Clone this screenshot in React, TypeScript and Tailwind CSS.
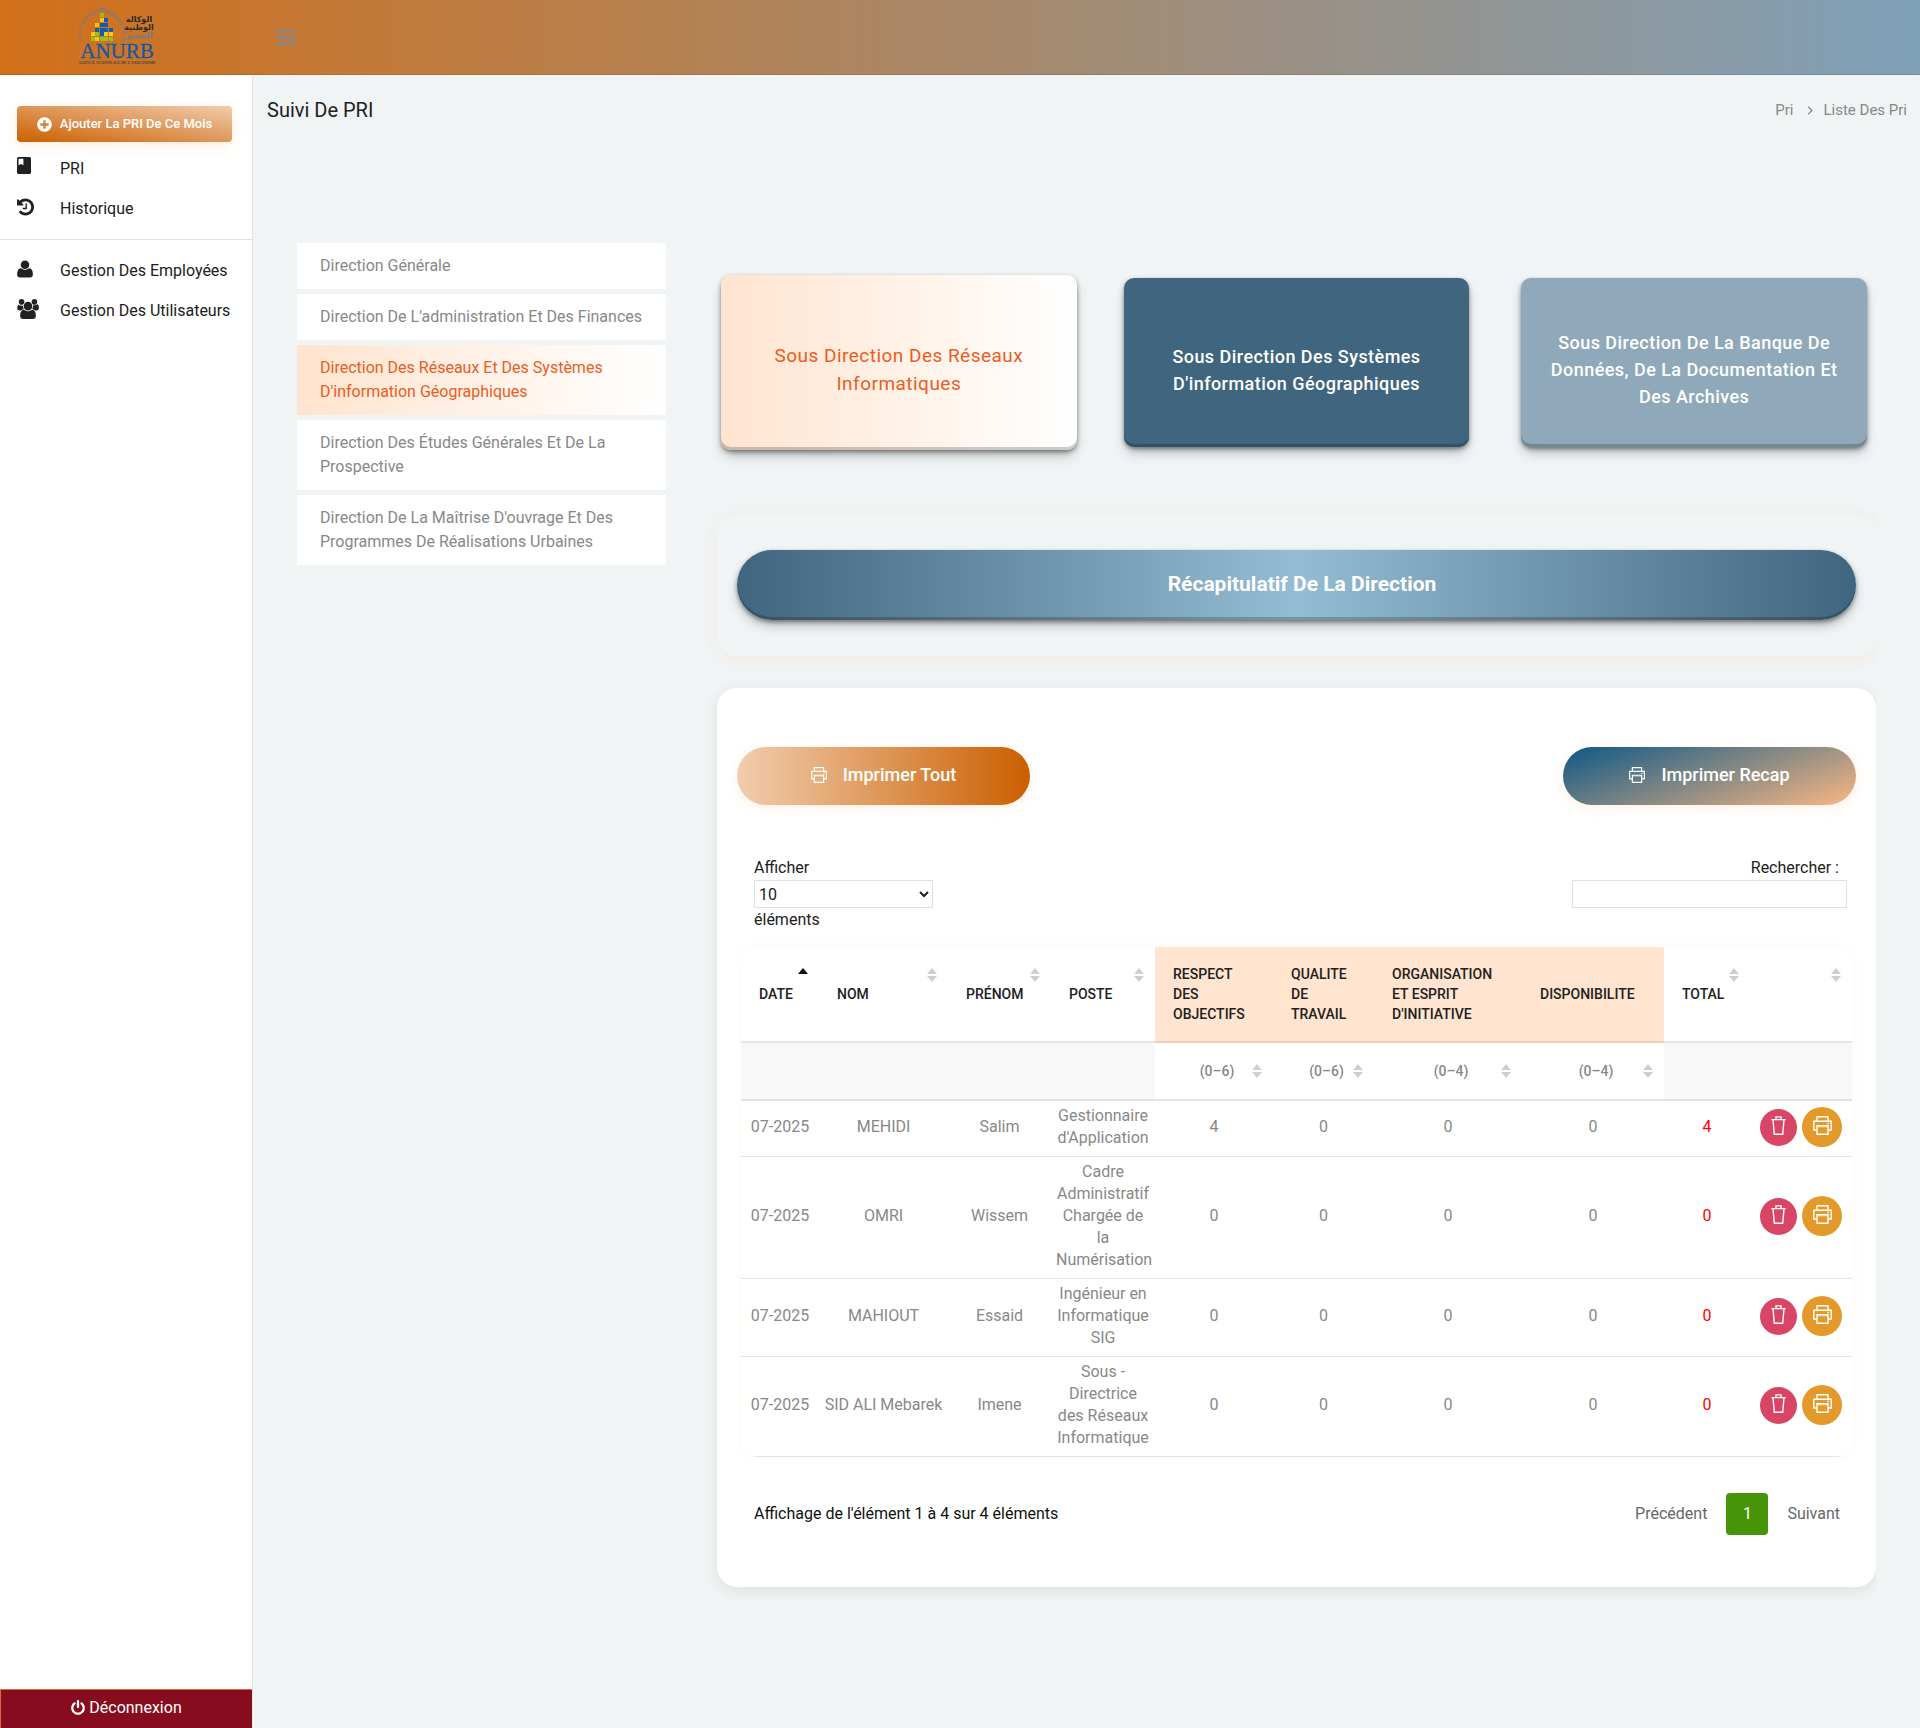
import type { ReactNode } from "react";
import { FaPlusCircle } from "react-icons/fa";

/* ---------- icons ---------- */

function FontGlyph({ width, d, className }: { width: number; d: string; className: string }) {
  return (
    <svg viewBox={`0 -1536 ${width} 1792`} fill="currentColor" className={className} aria-hidden="true">
      <path transform="scale(1 -1)" d={d} />
    </svg>
  );
}

const HISTORY =
  "M1536 640q0-156-61-298t-164-245-245-164-298-61q-172 0-327 72.5t-264 204.5q-7 10-6.5 22.5t8.5 20.5l137 138q10 9 25 9 16-2 23-12 73-95 179-147t225-52q104 0 198.5 40.5t163.5 109.5 109.5 163.5 40.5 198.5-40.5 198.5-109.5 163.5-163.5 109.5-198.5 40.5q-98 0-188-35.5t-160-101.5l137-138q31-30 14-69-17-40-59-40h-448q-26 0-45 19t-19 45v448q0 42 40 59 39 17 69-14l130-129q107 101 244.5 156.5t284.5 55.5q156 0 298-61t245-164 164-245 61-298zM896 928v-448q0-14-9-23t-23-9h-320q-14 0-23 9t-9 23v64q0 14 9 23t23 9h224v352q0 14 9 23t23 9h64q14 0 23-9t9-23z";
const USER =
  "M1408 131q0-120-73-189.5t-194-69.5h-874q-121 0-194 69.5t-73 189.5q0 53 3.5 103.5t14 109 26.5 108.5 43 97.5 62 81 85.5 53.5 111.5 20q9 0 42-21.5t74.5-48 108-48 133.5-21.5 133.5 21.5 108 48 74.5 48 42 21.5q61 0 111.5-20t85.5-53.5 62-81 43-97.5 26.5-108.5 14-109 3.5-103.5zM1088 1024q0-159-112.5-271.5t-271.5-112.5-271.5 112.5-112.5 271.5 112.5 271.5 271.5 112.5 271.5-112.5 112.5-271.5z";
const USERS =
  "M593 640q-162-5-265-128h-134q-82 0-138 40.5t-56 118.5q0 353 124 353 6 0 43.5-21t97.5-42.5 119-21.5q67 0 133 23-5-37-5-66 0-159 93-293zM1664 3q0-120-73-189.5t-194-69.5h-874q-121 0-194 69.5t-73 189.5q0 53 3.5 103.5t14 109 26.5 108.5 43 97.5 62 81 85.5 53.5 111.5 20q10 0 43-21.5t73-48 107-48 135-21.5 135 21.5 107 48 73 48 43 21.5q61 0 111.5-20t85.5-53.5 62-81 43-97.5 26.5-108.5 14-109 3.5-103.5zM640 1280q0-106-75-181t-181-75-181 75-75 181 75 181 181 75 181-75 75-181zM1344 896q0-159-112.5-271.5t-271.5-112.5-271.5 112.5-112.5 271.5 112.5 271.5 271.5 112.5 271.5-112.5 112.5-271.5zM1920 671q0-78-56-118.5t-138-40.5h-134q-103 123-265 128 93 134 93 293 0 29-5 66 66-23 133-23 59 0 119 21.5t97.5 42.5 43.5 21q124 0 124-353zM1792 1280q0-106-75-181t-181-75-181 75-75 181 75 181 181 75 181-75 75-181z";
const POWER =
  "M1536 640q0-156-61-298t-164-245-245-164-298-61-298 61-245 164-164 245-61 298q0 182 80.5 343t226.5 270q43 32 95.5 25t83.5-50q32-42 24.5-94.5t-49.5-84.5q-98-74-151.5-181t-53.5-228q0-104 40.5-198.5t109.5-163.5 163.5-109.5 198.5-40.5 198.5 40.5 163.5 109.5 109.5 163.5 40.5 198.5q0 121-53.5 228t-151.5 181q-42 32-49.5 84.5t24.5 94.5q31 43 84 50t95-25q146-109 226.5-270t80.5-343zM896 1408v-640q0-52-38-90t-90-38-90 38-38 90v640q0 52 38 90t90 38 90-38 38-90z";

function BookIcon() {
  return (
    <svg viewBox="0 0 14 17" className="h-[17px] w-[14px]" fill="#212121" aria-hidden="true">
      <path fillRule="evenodd" d="M1.5 0h11A1.5 1.5 0 0 1 14 1.5v14a1.5 1.5 0 0 1-1.5 1.5h-11A1.5 1.5 0 0 1 0 15.500v-14A1.500 1.500 0 0 1 1.500 0ZM1.500 1.800v6.400L4 6.900l2.400 1.300V1.800Z" />
    </svg>
  );
}

function PrinterIcon({ className }: { className: string }) {
  return (
    <svg viewBox="0 0 19 19" className={className} fill="none" stroke="currentColor" strokeWidth="1.400" aria-hidden="true">
      <path d="M4 5V.8h11V5" />
      <path d="M4 14H.8V5.200h17.400V14H15" />
      <path d="M4 9.800h11v8.400H4z" />
      <path d="M4 10.800h11" strokeWidth=".6" />
      <path d="M14.500 7.500h1.600" />
    </svg>
  );
}

function TrashIcon() {
  return (
    <svg viewBox="0 0 15 19" className="h-[19px] w-[15px]" fill="none" stroke="currentColor" strokeWidth="1.400" aria-hidden="true">
      <path d="M.3 3.600h14.400M5 3.400V.9h5v2.500" />
      <path d="M2 3.800 3.300 18.200h8.400L13 3.800" />
    </svg>
  );
}

function SortIcon({ active }: { active?: boolean }) {
  return (
    <svg
      viewBox="0 0 10 14"
      className={`absolute right-[11px] top-[21px] h-[14px] w-[10px] ${active ? "text-[#111111]" : "text-[#cfcfcf]"}`}
      fill="currentColor"
      aria-hidden="true"
    >
      <path d="M5 0 10 6H0z" />
      {!active && <path d="M5 14 0 8h10z" />}
    </svg>
  );
}

const LOGO_BLOCKS: [number, number, string][] = [
  [21, 5, "#8fc31f"],
  [21, 10, "#fdc909"],
  [25, 10, "#0f5cb0"],
  [16, 15, "#fdc909"],
  [21, 15, "#0f5cb0"],
  [25, 15, "#0f5cb0"],
  [16, 20, "#0f5cb0"],
  [21, 20, "#0f5cb0"],
  [25, 20, "#0f5cb0"],
  [30, 20, "#0f5cb0"],
  [12, 24, "#fdc909"],
  [16, 24, "#8fc31f"],
  [21, 24, "#0f5cb0"],
  [25, 24, "#fdc909"],
  [30, 24, "#fdc909"],
  [12, 29, "#8fc31f"],
  [16, 29, "#fdc909"],
  [21, 29, "#8fc31f"],
  [25, 29, "#8fc31f"],
  [30, 29, "#8fc31f"],
];

function Logo() {
  return (
    <svg viewBox="-4 -2 84 62" className="h-[62px] w-[84px]" role="img" aria-label="ANURB">
      <g fill="none" stroke="#6f7c94" strokeWidth="1">
        <path d="M1 34V24c1-2-1-3 0-5 1-4 3-4 5-8C10 6 16 3 23 0c7 3 13 6 17 11 2 4 4 4 5 8 1 2-1 3 0 5v10" strokeDasharray="5 .6" />
        <path d="M4 17c5-8 9-11 19-16 10 5 14 8 19 16" strokeWidth=".8" />
      </g>
      {LOGO_BLOCKS.map(([x, y, fill]) => (
        <rect key={`${x}-${y}`} x={x} y={y} width="4" height="4" fill={fill} />
      ))}
      <g fontFamily="'DejaVu Sans', sans-serif" fontSize="8" fontWeight="700" textAnchor="middle">
        <text x="60" y="14" fill="#2a2a2a">الوكالة</text>
        <text x="60" y="22" fill="#2a2a2a">الوطنية</text>
        <text x="60" y="30" fill="#6c7d97">للتعمير</text>
      </g>
      <text x="38" y="50" fontFamily="'Liberation Serif', serif" fontSize="21" fill="#1159a8" stroke="#1159a8" strokeWidth=".3" textAnchor="middle">
        ANURB
      </text>
      <text x="38" y="56" fontFamily="'Liberation Serif', serif" fontSize="4" fontWeight="700" fill="#4a4340" textAnchor="middle">
        AGENCE NATIONALE DE L'URBANISME
      </text>
    </svg>
  );
}

/* ---------- data ---------- */

const DIRECTIONS = [
  "Direction Générale",
  "Direction De L'administration Et Des Finances",
  "Direction Des Réseaux Et Des Systèmes D'information Géographiques",
  "Direction Des Études Générales Et De La Prospective",
  "Direction De La Maîtrise D'ouvrage Et Des Programmes De Réalisations Urbaines",
];

const ROWS = [
  { date: "07-2025", nom: "MEHIDI", prenom: "Salim", poste: "Gestionnaire d'Application", notes: [4, 0, 0, 0], total: 4 },
  { date: "07-2025", nom: "OMRI", prenom: "Wissem", poste: "Cadre Administratif Chargée de la Numérisation", notes: [0, 0, 0, 0], total: 0 },
  { date: "07-2025", nom: "MAHIOUT", prenom: "Essaid", poste: "Ingénieur en Informatique SIG", notes: [0, 0, 0, 0], total: 0 },
  { date: "07-2025", nom: "SID ALI Mebarek", prenom: "Imene", poste: "Sous - Directrice des Réseaux Informatique", notes: [0, 0, 0, 0], total: 0 },
];

const RAISED =
  "shadow-[0_2px_4px_rgba(0,0,0,0.4),0_7px_13px_-3px_rgba(0,0,0,0.3),inset_0_-3px_0_rgba(0,0,0,0.2)]";

/* ---------- parts ---------- */

function NavItem({ icon, children }: { icon: ReactNode; children: ReactNode }) {
  return (
    <li>
      <a href="#" className="flex h-10 items-center pl-[17px] text-base text-[#212121]">
        <span className="flex h-6 w-[43px] shrink-0 items-start">{icon}</span>
        {children}
      </a>
    </li>
  );
}

function Sidebar() {
  return (
    <aside className="flex w-[253px] shrink-0 flex-col border-r border-[#e4e7e8] bg-white">
      <div className="px-[17px] pt-[31px] pr-5">
        <button className="flex h-9 w-full items-center justify-center gap-2 rounded bg-[linear-gradient(10deg,#cb5f00,#f1cdae)] text-[13px] font-medium text-white shadow-[0_3px_12px_rgba(255,150,80,0.2)]">
          <FaPlusCircle className="size-[15px]" />
          Ajouter La PRI De Ce Mois
        </button>
      </div>
      <nav>
        <ul className="mt-[7px] border-b border-[#e3e3e3] pb-2.5">
          <NavItem icon={<BookIcon />}>PRI</NavItem>
          <NavItem icon={<FontGlyph width={1536} d={HISTORY} className="h-5 w-[17px]" />}>Historique</NavItem>
        </ul>
        <ul className="mt-[11px]">
          <NavItem icon={<FontGlyph width={1408} d={USER} className="h-5 w-4" />}>Gestion Des Employées</NavItem>
          <NavItem icon={<FontGlyph width={1920} d={USERS} className="h-5 w-[22px]" />}>Gestion Des Utilisateurs</NavItem>
        </ul>
      </nav>
      <button className="mt-auto flex h-[39px] items-center justify-center gap-1 border-l border-t border-[#e2663a] bg-[#870d1e] pb-0.5 text-base text-white">
        <FontGlyph width={1536} d={POWER} className="h-4 w-[14px]" />
        Déconnexion
      </button>
    </aside>
  );
}

function SubDirections() {
  return (
    <div className="-mr-[17px] grid grid-cols-3 items-center pt-[33px]">
      <div className="px-[21px]">
        <button className={`flex h-[175px] w-full items-center justify-center rounded-[10px] bg-[linear-gradient(90deg,#ffe4cf,#ffffff)] px-6 pt-3.5 text-[19px] leading-7 tracking-wide text-[#ec5c22] ${RAISED}`}>
          Sous Direction Des Réseaux Informatiques
        </button>
      </div>
      <div className="px-[26px]">
        <button className={`flex h-[169px] w-full items-center justify-center rounded-[10px] bg-[#3f667e] px-6 pt-3.5 text-lg font-medium leading-[27px] tracking-wide text-white ${RAISED}`}>
          Sous Direction Des Systèmes D'information Géographiques
        </button>
      </div>
      <div className="px-[26px]">
        <button className={`flex h-[169px] w-full items-center justify-center rounded-[10px] bg-[#8fa9ba] px-6 pt-3.5 text-lg font-medium leading-[27px] tracking-wide text-white ${RAISED}`}>
          Sous Direction De La Banque De Données, De La Documentation Et Des Archives
        </button>
      </div>
    </div>
  );
}

function HeadCell({ children, tinted, sort, active }: { children?: ReactNode; tinted?: boolean; sort?: boolean; active?: boolean }) {
  return (
    <th
      scope="col"
      className={`relative h-24 border-b-2 pl-[18px] pr-7 text-left align-middle text-sm font-medium leading-5 text-[#212121] ${
        tinted ? "border-[#ebcfbb] bg-[#ffe4cf]" : "border-[#e5e5e5]"
      }`}
    >
      {children}
      {sort && <SortIcon active={active} />}
    </th>
  );
}

function ScaleCell({ children }: { children: ReactNode }) {
  return (
    <th scope="col" className="relative h-[58px] border-b-2 border-[#e5e5e5] pl-[18px] pr-3 text-center text-sm font-medium text-[#888888]">
      {children}
      <SortIcon />
    </th>
  );
}

function ScoreTable() {
  const blank = "border-b-2 border-[#e2e2e2] bg-[#f8f8f8]";
  const cell = "border-b border-[#e5e5e5] px-[5px] pb-[7px] pt-1";
  return (
    <div className="mx-6 mt-[15px] overflow-hidden rounded-[15px] shadow-[0_0_8px_rgba(255,230,210,0.25)]">
      <table className="w-full table-fixed border-separate border-spacing-0">
        <colgroup>
          <col className="w-[78px]" />
          <col className="w-[129px]" />
          <col className="w-[103px]" />
          <col className="w-[104px]" />
          <col className="w-[118px]" />
          <col className="w-[101px]" />
          <col className="w-[148px]" />
          <col className="w-[142px]" />
          <col className="w-[86px]" />
          <col className="w-[102px]" />
        </colgroup>
        <thead>
          <tr>
            <HeadCell sort active>DATE</HeadCell>
            <HeadCell sort>NOM</HeadCell>
            <HeadCell sort>PRÉNOM</HeadCell>
            <HeadCell sort>POSTE</HeadCell>
            <HeadCell tinted>RESPECT DES OBJECTIFS</HeadCell>
            <HeadCell tinted>QUALITE DE TRAVAIL</HeadCell>
            <HeadCell tinted>ORGANISATION ET ESPRIT D'INITIATIVE</HeadCell>
            <HeadCell tinted>DISPONIBILITE</HeadCell>
            <HeadCell sort>TOTAL</HeadCell>
            <HeadCell sort />
          </tr>
          <tr>
            <td colSpan={4} className={blank} />
            <ScaleCell>(0–6)</ScaleCell>
            <ScaleCell>(0–6)</ScaleCell>
            <ScaleCell>(0–4)</ScaleCell>
            <ScaleCell>(0–4)</ScaleCell>
            <td colSpan={2} className={blank} />
          </tr>
        </thead>
        <tbody className="text-center text-base leading-[22px] text-[#888888]">
          {ROWS.map((row) => (
            <tr key={row.nom}>
              <td className={cell}>{row.date}</td>
              <td className={cell}>{row.nom}</td>
              <td className={cell}>{row.prenom}</td>
              <td className={cell}>{row.poste}</td>
              {row.notes.map((note, i) => (
                <td key={i} className={cell}>{note}</td>
              ))}
              <td className={`${cell} text-[#ff0000]`}>{row.total}</td>
              <td className={cell}>
                <div className="flex items-center justify-center gap-[5px]">
                  <button aria-label="Supprimer" className="flex size-[37px] shrink-0 items-center justify-center rounded-full bg-[#d94564] pb-1 text-white">
                    <TrashIcon />
                  </button>
                  <button aria-label="Imprimer" className="flex size-10 shrink-0 items-center justify-center rounded-full bg-[#e49a2a] pb-1 text-white">
                    <PrinterIcon className="size-[19px]" />
                  </button>
                </div>
              </td>
            </tr>
          ))}
        </tbody>
      </table>
    </div>
  );
}

export default function App() {
  return (
    <div className="flex min-h-screen flex-col bg-[#f0f4f5] font-['Roboto',sans-serif]">
      <header className="flex h-[75px] items-center border-b border-black/10 bg-[linear-gradient(90deg,#d2701a,#7fa0b8)]">
        <a href="#" className="ml-[75px] block"><Logo /></a>
        <button aria-label="Menu" className="ml-[117px] flex w-5 flex-col gap-[3px]">
          <span className="h-[3px] rounded-sm bg-[#8a8580]" />
          <span className="h-[3px] rounded-sm bg-[#8a8580]" />
          <span className="h-[3px] rounded-sm bg-[#8a8580]" />
        </button>
      </header>

      <div className="flex flex-1">
        <Sidebar />

        <main className="min-w-0 flex-1">
          <div className="flex h-[70px] items-center justify-between pl-3.5 pr-[13px]">
            <h1 className="text-xl text-[#212121]">Suivi De PRI</h1>
            <nav aria-label="Fil d'ariane" className="flex items-center text-[15px] text-[#888888]">
              <a href="#">Pri</a>
              <svg viewBox="0 0 6 9" className="ml-3.5 mr-2.5 h-[9px] w-[6px]" fill="none" stroke="currentColor" strokeWidth="1.300" aria-hidden="true">
                <path d="m1 .6 4 3.900-4 3.900" />
              </svg>
              <a href="#">Liste Des Pri</a>
            </nav>
          </div>

          <div className="flex items-start pb-[141px] pl-11 pr-11 pt-[97px]">
            <ul className="flex w-[369px] shrink-0 flex-col gap-[5px] pt-px">
              {DIRECTIONS.map((name, i) => (
                <li key={name}>
                  <a
                    href="#"
                    className={`block py-[11px] pl-[23px] pr-5 text-base leading-6 ${
                      i === 2 ? "bg-[linear-gradient(90deg,#ffe4cf,#ffffff)] text-[#ec5c22]" : "bg-white text-[#888888]"
                    }`}
                  >
                    {name}
                  </a>
                </li>
              ))}
            </ul>

            <div className="ml-[34px] min-w-0 flex-1">
              <SubDirections />

              <div className="-mb-10 overflow-x-clip pb-10 pl-[17px] pt-16">
                <section className="rounded-[20px] px-5 py-9 shadow-[0_3px_14px_rgba(255,215,180,0.3)]">
                  <button className={`flex h-[70px] w-full items-center justify-center rounded-full bg-[linear-gradient(90deg,#3f667e,#94bcd2,#3f667e)] pl-[11px] text-[21px] font-bold text-white ${RAISED}`}>
                    Récapitulatif De La Direction
                  </button>
                </section>

                <section className="mt-8 rounded-[20px] bg-white pb-[52px] pt-[59px] shadow-[0_3px_14px_rgba(90,40,0,0.1)]">
                  <div className="flex justify-between px-5">
                    <button className="flex h-[58px] w-[293px] items-center justify-center gap-4 rounded-full bg-[linear-gradient(90deg,#f1cdae,#cb5f00)] pb-[3px] text-lg font-medium text-white shadow-[0_3px_12px_rgba(255,150,80,0.15)]">
                      <PrinterIcon className="size-4" />
                      Imprimer Tout
                    </button>
                    <button className="flex h-[58px] w-[293px] items-center justify-center gap-4 rounded-full bg-[linear-gradient(160deg,#0d5886,#fab783)] pb-[3px] text-lg font-medium text-white shadow-[0_3px_12px_rgba(255,150,80,0.15)]">
                      <PrinterIcon className="size-4" />
                      Imprimer Recap
                    </button>
                  </div>

                  <div className="mt-[50px] flex items-start justify-between pl-[37px] pr-[29px] text-base leading-[25px] text-[#212121]">
                    <div className="flex flex-col items-start">
                      <label htmlFor="page-size">Afficher</label>
                      <select id="page-size" defaultValue="10" className="h-7 w-[179px] border border-[#e0e0e0] bg-white text-base leading-5">
                        <option>10</option>
                        <option>25</option>
                        <option>50</option>
                      </select>
                      <label htmlFor="page-size" className="leading-6">éléments</label>
                    </div>
                    <div className="flex flex-col items-end">
                      <label htmlFor="search" className="mr-2">Rechercher :</label>
                      <input id="search" type="search" className="h-7 w-[275px] border border-[#e0e0e0] bg-white px-2" />
                    </div>
                  </div>

                  <ScoreTable />

                  <div className="mt-9 flex items-center justify-between pl-[37px] pr-9 text-base">
                    <p className="text-[#111111]">Affichage de l'élément 1 à 4 sur 4 éléments</p>
                    <div className="flex items-center gap-[19px] text-[#666666]">
                      <button>Précédent</button>
                      <button className="size-[42px] rounded-sm bg-[#469408] text-white" aria-current="page">1</button>
                      <button>Suivant</button>
                    </div>
                  </div>
                </section>
              </div>
            </div>
          </div>
        </main>
      </div>
    </div>
  );
}
